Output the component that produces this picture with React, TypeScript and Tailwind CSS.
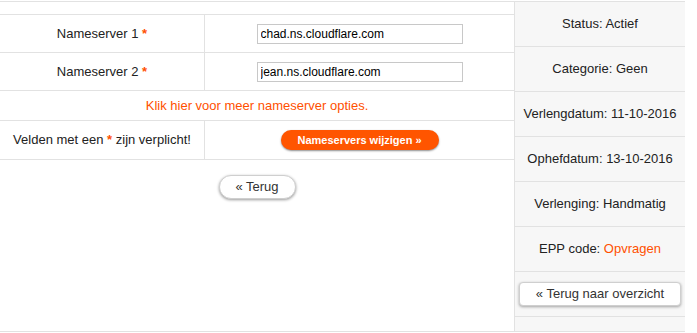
import React from 'react';

const sideRows: { label: string; value: string; link?: boolean }[] = [
  { label: 'Status:', value: 'Actief' },
  { label: 'Categorie:', value: 'Geen' },
  { label: 'Verlengdatum:', value: '11-10-2016' },
  { label: 'Ophefdatum:', value: '13-10-2016' },
  { label: 'Verlenging:', value: 'Handmatig' },
  { label: 'EPP code:', value: 'Opvragen', link: true },
];

function Req() {
  return <span className="text-[#ff5000] font-bold">*</span>;
}

function NsRow({ n, value }: { n: number; value: string }) {
  return (
    <div className="flex h-[38px] border-b border-[#e2e2e2]">
      <div className="w-[205px] border-r border-[#e2e2e2] flex items-center justify-center">
        <span>
          Nameserver {n} <Req />
        </span>
      </div>
      <div className="flex-1 flex items-center justify-center">
        <input
          readOnly
          value={value}
          className="w-[206px] h-[20px] border border-[#c8c8c8] px-[3px] text-[12px] text-black outline-none"
        />
      </div>
    </div>
  );
}

export default function App() {
  return (
    <div
      className="w-[697px] h-[333px] bg-white text-[13px] text-[#222] pt-px"
      style={{ fontFamily: '"Liberation Sans", Arial, sans-serif' }}
    >
      <div className="w-[685px] flex border-t border-b border-[#e2e2e2]">
        {/* main table */}
        <div className="w-[514px] flex flex-col">
          <div className="h-[13px] border-b border-[#e2e2e2]" />
          <NsRow n={1} value="chad.ns.cloudflare.com" />
          <NsRow n={2} value="jean.ns.cloudflare.com" />
          <div className="h-[30px] border-b border-[#e2e2e2] flex items-center justify-center text-[#ff5000]">
            Klik hier voor meer nameserver opties.
          </div>
          <div className="flex h-[39px] border-b border-[#e2e2e2]">
            <div className="w-[205px] border-r border-[#e2e2e2] flex items-center justify-center">
              <span>
                Velden met een <Req /> zijn verplicht!
              </span>
            </div>
            <div className="flex-1 flex items-center justify-center">
              <button className="w-[158px] h-[20px] rounded-full bg-[#ff5500] text-white text-[11px] font-bold shadow-[0_1px_2px_rgba(0,0,0,0.45)]">
                Nameservers wijzigen »
              </button>
            </div>
          </div>
          <div className="flex justify-center pt-[15px]">
            <button className="w-[77px] h-[24px] rounded-full bg-white border border-[#cfcfcf] text-[#333] text-[13px] shadow-[0_1px_3px_rgba(0,0,0,0.4)]">
              « Terug
            </button>
          </div>
        </div>

        {/* sidebar */}
        <div className="w-[171px] border-l border-[#e2e2e2] bg-[#f7f7f7] flex flex-col">
          {sideRows.map((r) => (
            <div key={r.label} className="h-[45px] border-b border-[#e2e2e2] flex items-center justify-center">
              <span>
                {r.label} <span className={r.link ? 'text-[#ff5000]' : ''}>{r.value}</span>
              </span>
            </div>
          ))}
          <div className="h-[45px] border-b border-[#e2e2e2] flex items-center justify-center">
            <button className="w-[162px] h-[24px] rounded-[4px] bg-white border border-[#cfcfcf] text-[#333] text-[13px] shadow-[0_1px_3px_rgba(0,0,0,0.35)]">
              « Terug naar overzicht
            </button>
          </div>
          <div className="h-[14px]" />
        </div>
      </div>
    </div>
  );
}
